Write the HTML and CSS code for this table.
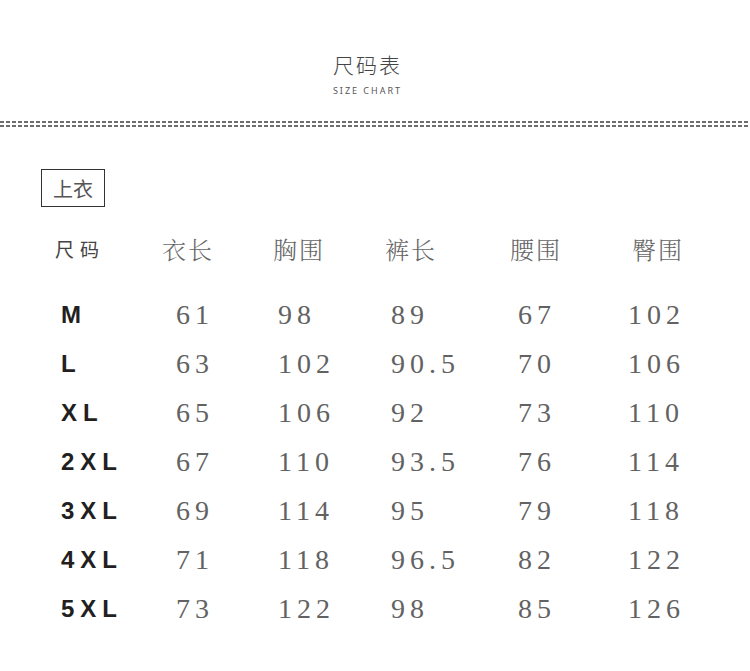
FILE: index.html
```html
<!DOCTYPE html>
<html lang="zh">
<head>
<meta charset="utf-8">
<title>尺码表</title>
<link rel="stylesheet" href="styles.css">
</head>
<body>
<div class="page">
  <header class="head">
    <div class="title">尺码表</div>
    <div class="subtitle">SIZE CHART</div>
  </header>
  <div class="divider">
    <div class="dash"></div>
    <div class="dash"></div>
  </div>
  <div class="tag">上衣</div>
  <div class="chart chart-head">
    <div class="hd h0">尺码</div>
    <div class="hd">衣长</div>
    <div class="hd">胸围</div>
    <div class="hd">裤长</div>
    <div class="hd">腰围</div>
    <div class="hd h5">臀围</div>
  </div>
  <div class="chart chart-body">
    <div class="sz">M</div><div class="n n1">61</div><div class="n n2">98</div><div class="n n3">89</div><div class="n n4">67</div><div class="n n5">102</div>
    <div class="sz">L</div><div class="n n1">63</div><div class="n n2">102</div><div class="n n3">90.5</div><div class="n n4">70</div><div class="n n5">106</div>
    <div class="sz">XL</div><div class="n n1">65</div><div class="n n2">106</div><div class="n n3">92</div><div class="n n4">73</div><div class="n n5">110</div>
    <div class="sz">2XL</div><div class="n n1">67</div><div class="n n2">110</div><div class="n n3">93.5</div><div class="n n4">76</div><div class="n n5">114</div>
    <div class="sz">3XL</div><div class="n n1">69</div><div class="n n2">114</div><div class="n n3">95</div><div class="n n4">79</div><div class="n n5">118</div>
    <div class="sz">4XL</div><div class="n n1">71</div><div class="n n2">118</div><div class="n n3">96.5</div><div class="n n4">82</div><div class="n n5">122</div>
    <div class="sz">5XL</div><div class="n n1">73</div><div class="n n2">122</div><div class="n n3">98</div><div class="n n4">85</div><div class="n n5">126</div>
  </div>
</div>
</body>
</html>
```

FILE: styles.css
```css
html, body {
  margin: 0;
  padding: 0;
  background: #fff;
}
.page {
  width: 750px;
  height: 671px;
  overflow: hidden;
  font-family: "Noto Sans CJK SC", "Liberation Sans", sans-serif;
  color: #555;
}
.head {
  padding-top: 52px;
  padding-right: 17px;
  text-align: center;
}
.title {
  font-size: 21px;
  line-height: 24px;
  letter-spacing: 2px;
  font-weight: 300;
  color: #444;
  padding-left: 2px;
}
.subtitle {
  margin-top: 9px;
  font-family: "Noto Sans", "Liberation Sans", sans-serif;
  font-size: 9px;
  line-height: 12px;
  letter-spacing: 2px;
  color: #555;
  padding-left: 2px;
}
.divider {
  margin-top: 24px;
  display: flex;
  flex-direction: column;
  gap: 2px;
}
.dash {
  height: 2px;
  background: repeating-linear-gradient(90deg, #6e6e6e 0 4px, transparent 4px 6px);
}
.tag {
  margin-top: 42px;
  margin-left: 41px;
  width: 64px;
  height: 38px;
  box-sizing: border-box;
  border: 1px solid #333;
  display: flex;
  align-items: center;
  justify-content: center;
  font-size: 20px;
  color: #555;
  font-weight: 400;
}
.chart {
  margin-left: 55px;
  display: grid;
  grid-template-columns: 107px 111px 112px 125px 118px 1fr;
}
.chart-head {
  margin-top: 27px;
  grid-auto-rows: 30px;
}
.chart-body {
  margin-top: 26px;
  grid-auto-rows: 49px;
}
.hd {
  font-family: "Noto Serif CJK SC", "Noto Sans CJK SC", serif;
  font-size: 24px;
  line-height: 30px;
  letter-spacing: 2px;
  color: #666;
  font-weight: 300;
}
.h0 {
  font-family: "Noto Sans CJK SC", sans-serif;
  font-size: 19px;
  letter-spacing: 6px;
  font-weight: 400;
  color: #444;
}
.h5 {
  padding-left: 4px;
}
.sz {
  padding-left: 6px;
  font-family: "Liberation Sans", Arial, sans-serif;
  font-weight: 700;
  font-size: 24px;
  line-height: 49px;
  letter-spacing: 6px;
  color: #231f20;
}
.n {
  font-family: "Liberation Serif", "Times New Roman", serif;
  font-size: 28px;
  line-height: 50px;
  letter-spacing: 5px;
  color: #626262;
}
.n1 { padding-left: 14px; }
.n2 { padding-left: 5px; }
.n3 { padding-left: 6px; }
.n4 { padding-left: 8px; }
.n5 { padding-left: 0; }
```
